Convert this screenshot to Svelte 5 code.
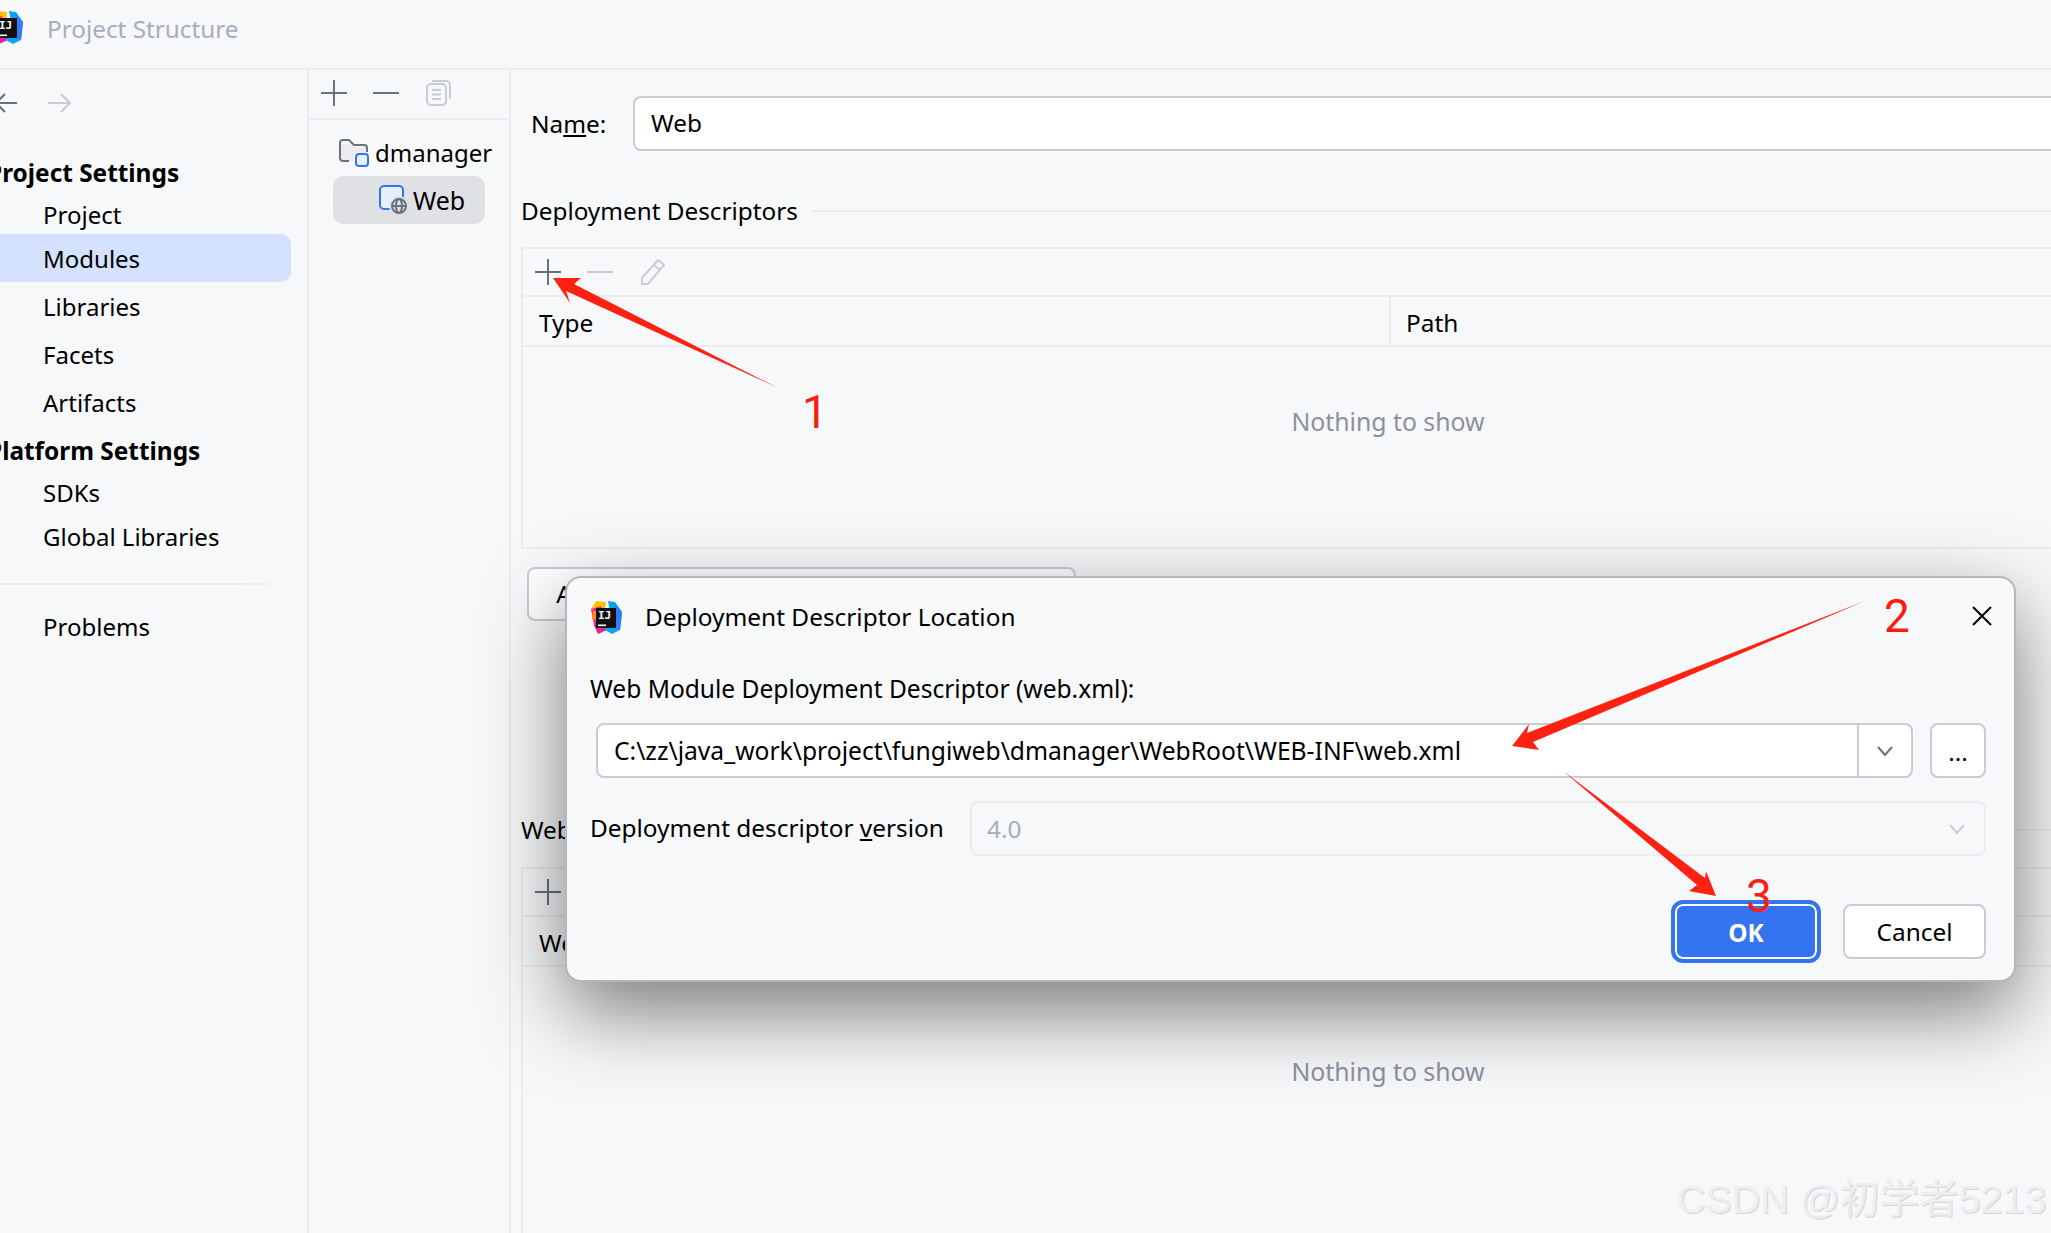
<script>
  const settings = ['Project', 'Modules', 'Libraries', 'Facets', 'Artifacts'];
  const platform = ['SDKs', 'Global Libraries'];
</script>

{#snippet logo()}
  <svg class="logo" width="31" height="33" viewBox="0 0 31 33">
    <polygon points="5,0 15,1 14,12 0,8" fill="#ffc107"/>
    <polygon points="0,8 10,5 12,26 7,32 3,24" fill="#ff2d78"/>
    <polygon points="2,10 8,10 8,20 1,18" fill="#ff8a1f"/>
    <polygon points="3,24 12,22 16,29 7,33" fill="#e91e9c"/>
    <polygon points="17,0 24,1 31,11 29,29 21,33 14,29 20,16" fill="#08a6f2"/>
    <polygon points="24,3 31,11 29,29 24,27" fill="#2f7df6"/>
    <rect x="5" y="7" width="20" height="20" fill="#111114"/>
    <text x="7" y="18" class="logo-text">IJ</text>
    <rect x="7" y="23.5" width="8" height="1.6" fill="#fff"/>
  </svg>
{/snippet}

{#snippet plus(cls = '')}
  <svg class="ico {cls}" width="26" height="26" viewBox="0 0 26 26"><path d="M13 0v26M0 13h26"/></svg>
{/snippet}

{#snippet minus(cls = '')}
  <svg class="ico {cls}" width="26" height="26" viewBox="0 0 26 26"><path d="M0 13h26"/></svg>
{/snippet}

{#snippet chevron(cls = '')}
  <svg class="ico {cls}" width="18" height="12" viewBox="0 0 18 12"><path d="M2 2l7 8 7-8"/></svg>
{/snippet}

<div class="page">
  <header class="titlebar">
    {@render logo()}
    <span class="title">Project Structure</span>
  </header>

  <div class="body">
    <aside class="sidebar">
      <div class="nav">
        <svg class="ico" width="24" height="20" viewBox="0 0 24 20"><path d="M22 10H1M10 1l-9 9 9 9"/></svg>
        <svg class="ico off" width="24" height="20" viewBox="0 0 24 20"><path d="M1 10h21M14 1l9 9-9 9"/></svg>
      </div>
      <div class="heading">Project Settings</div>
      {#each settings as item, i}
        <div class="item" class:selected={item === 'Modules'} class:first={i === 0}>{item}</div>
      {/each}
      <div class="heading second">Platform Settings</div>
      {#each platform as item, i}
        <div class="item" class:sdk={i === 0} class:global={i === 1}>{item}</div>
      {/each}
      <div class="rule"></div>
      <div class="item problems">Problems</div>
    </aside>

    <aside class="tree">
      <div class="tree-tools">
        {@render plus()}
        {@render minus()}
        <svg class="ico off" width="26" height="26" viewBox="0 0 26 26">
          <rect x="2" y="4" width="19" height="21" rx="4"/>
          <path d="M7 1h14a4 4 0 0 1 4 4v14M7 10h9M7 14.500h9M7 19h9"/>
        </svg>
      </div>
      <div class="node">
        <svg width="30" height="28" viewBox="0 0 30 28">
          <path d="M1 20V5h10l4 3h12v6H15v8H4z" fill="#ebecf0"/>
          <path d="M10 22H4a3 3 0 0 1-3-3V4a3 3 0 0 1 3-3h6l5 5h10a3 3 0 0 1 3 3v4" fill="none" stroke="#6c707e" stroke-width="2"/>
          <rect x="17" y="15" width="12" height="12" rx="3" fill="#e7effd" stroke="#3574f0" stroke-width="2"/>
        </svg>
        <span>dmanager</span>
      </div>
      <div class="node web">
        <svg width="28" height="30" viewBox="0 0 28 30">
          <rect x="1" y="1" width="23" height="23" rx="4" fill="#e7effd" stroke="#3574f0" stroke-width="2"/>
          <circle cx="20" cy="21" r="10" fill="#dfe1e5"/>
          <g fill="none" stroke="#6c707e" stroke-width="2">
            <circle cx="20" cy="21" r="7"/>
            <ellipse cx="20" cy="21" rx="3" ry="7"/>
            <path d="M13 21h14"/>
          </g>
        </svg>
        <span>Web</span>
      </div>
    </aside>

    <main class="content">
      <div class="name-row">
        <label for="module-name"><span>Na<u>m</u>e:</span></label>
        <div class="input" id="module-name">Web</div>
      </div>

      <div class="section">
        <span>Deployment Descriptors</span>
        <i></i>
      </div>
      <div class="table short">
        <div class="tools">
          {@render plus()}
          {@render minus('off')}
          <svg class="ico off" width="26" height="26" viewBox="0 0 26 26">
            <path d="M19 1l6 5L9 25H3v-6zM15 6l6 5"/>
          </svg>
        </div>
        <div class="head">
          <div class="col-a">Type</div>
          <div class="col-b">Path</div>
        </div>
        <div class="empty">Nothing to show</div>
      </div>

      <div class="add-btn">Add Application Server specific descriptor...</div>

      <div class="section web-section">
        <span>Web Resource Directories</span>
        <i></i>
      </div>
      <div class="table tall">
        <div class="tools">
          {@render plus()}
          {@render minus('off')}
        </div>
        <div class="head">
          <div class="col-a">Web Resource Directory</div>
          <div class="col-b">Path Relative to Deployment Root</div>
        </div>
        <div class="empty">Nothing to show</div>
      </div>
    </main>
  </div>

  <div class="dialog">
    <div class="dlg-head">
      {@render logo()}
      <span>Deployment Descriptor Location</span>
      <svg class="close" width="20" height="20" viewBox="0 0 20 20"><path d="M1 1l18 18M19 1L1 19"/></svg>
    </div>
    <div class="dlg-label">Web Module Deployment Descriptor (web.xml):</div>
    <div class="path-row">
      <div class="path">
        <span class="path-text">C:\zz\java_work\project\fungiweb\dmanager\WebRoot\WEB-INF\web.xml</span>
        <div class="path-arrow">{@render chevron()}</div>
      </div>
      <div class="browse">...</div>
    </div>
    <div class="version-row">
      <span class="version-label">Deployment descriptor <u>v</u>ersion</span>
      <div class="version">
        <span>4.0</span>
        {@render chevron('off')}
      </div>
    </div>
    <div class="dlg-foot">
      <div class="ok">OK</div>
      <div class="cancel">Cancel</div>
    </div>
  </div>

  <svg class="arrows" width="2051" height="1233" viewBox="0 0 2051 1233">
    <polygon points="553,278 581,278 574,284 776,387 566,291 570,303"/>
    <polygon points="1865,601 1533,742 1539,750 1512,746 1529,724 1527,733"/>
    <polygon points="1563,771 1705,878 1706,871 1716,896 1689,891 1697,885"/>
  </svg>
  <span class="mark one">1</span>
  <span class="mark two">2</span>
  <span class="mark three">3</span>
  <span class="watermark">CSDN @初学者5213</span>
</div>

<style>
  :global(body) {
    margin: 0;
  }
  .page {
    position: relative;
    width: 2051px;
    height: 1233px;
    overflow: hidden;
    display: flex;
    flex-direction: column;
    background: #f7f8fa;
    color: #000;
    font: 24px/30px "Noto Sans", "Open Sans", sans-serif;
  }
  .ico {
    flex: none;
    fill: none;
    stroke: #6c707e;
    stroke-width: 2;
  }
  .ico.off {
    stroke: #c9ccd6;
  }
  .logo-text {
    font: 700 11px "DejaVu Sans Mono", monospace;
    fill: #fff;
  }
  .logo {
    flex: none;
  }

  .titlebar {
    flex: none;
    height: 70px;
    box-sizing: border-box;
    display: flex;
    align-items: flex-start;
    gap: 24px;
    margin-left: -8px;
    padding-top: 11px;
    border-bottom: 2px solid #ebecf0;
  }
  .title {
    color: #a8adbd;
    margin-top: 3px;
    font-size: 24.3px;
  }

  .body {
    flex: 1;
    display: flex;
    min-height: 0;
  }
  .sidebar {
    flex: none;
    width: 309px;
    box-sizing: border-box;
    border-right: 2px solid #ebecf0;
  }
  .nav {
    height: 82px;
    padding-top: 23px;
    box-sizing: border-box;
    display: flex;
    gap: 28px;
    margin-left: -5px;
  }
  .heading {
    height: 42px;
    line-height: 42px;
    margin-left: -13px;
    font-weight: 700;
    font-size: 24.4px;
  }
  .heading.second {
    height: 48px;
    line-height: 48px;
  }
  .item {
    height: 48px;
    line-height: 48px;
    padding-left: 43px;
    width: 248px;
  }
  .item.first {
    height: 40px;
    line-height: 42px;
  }
  .item.selected {
    background: #d4e2ff;
    border-radius: 0 10px 10px 0;
    margin-bottom: 1px;
    line-height: 50px;
  }
  .item.sdk {
    height: 36px;
    line-height: 36px;
  }
  .item.global {
    height: 52px;
    line-height: 52px;
  }
  .rule {
    height: 2px;
    margin: 20px 16px 18px 0;
    background: linear-gradient(to right, #ebecf0 85%, #f7f8fa);
  }

  .tree {
    flex: none;
    width: 202px;
    box-sizing: border-box;
    border-right: 2px solid #ebecf0;
  }
  .tree-tools {
    height: 50px;
    box-sizing: border-box;
    border-bottom: 2px solid #ebecf0;
    display: flex;
    gap: 26px;
    align-items: center;
    padding: 0 0 2px 12px;
  }
  .node {
    height: 36px;
    margin: 15px 0 5px 30px;
    display: flex;
    align-items: center;
    gap: 6px;
  }
  .node.web {
    height: 48px;
    width: 152px;
    box-sizing: border-box;
    margin: 0 0 0 24px;
    padding: 0 0 0 46px;
    gap: 6px;
    background: #dfe1e5;
    border-radius: 10px;
    font-size: 25px;
  }

  .content {
    flex: 1;
    min-width: 0;
    overflow: hidden;
    display: flex;
    flex-direction: column;
    padding-left: 10px;
    font-size: 24.4px;
  }
  .name-row {
    margin: 26px -20px 0 10px;
    display: flex;
    align-items: center;
  }
  .name-row label {
    flex: none;
    width: 102px;
  }
  .input {
    flex: 1;
    height: 55px;
    box-sizing: border-box;
    border: 2px solid #c9ccd6;
    border-right: none;
    border-radius: 8px 0 0 8px;
    background: #fff;
    padding-left: 16px;
    line-height: 50px;
  }
  .section {
    height: 30px;
    margin-top: 45px;
    display: flex;
    align-items: center;
    gap: 14px;
    font-size: 24.3px;
  }
  .section i {
    flex: 1;
    height: 2px;
    background: #ebecf0;
  }
  .web-section {
    margin-top: 194px;
  }
  .table {
    margin: 21px 0 0;
    border: 2px solid #ebecf0;
    border-right: none;
    box-sizing: border-box;
  }
  .table.short {
    height: 302px;
  }
  .table.tall {
    flex: 1;
    border-bottom: none;
    margin-top: 22px;
  }
  .tools {
    height: 48px;
    box-sizing: border-box;
    border-bottom: 2px solid #ebecf0;
    display: flex;
    align-items: center;
    gap: 26px;
    padding: 0 0 0 12px;
  }
  .head {
    height: 50px;
    box-sizing: border-box;
    border-bottom: 2px solid #ebecf0;
    display: flex;
    align-items: center;
  }
  .col-a {
    width: 868px;
    height: 100%;
    line-height: 51px;
    padding-left: 16px;
    box-sizing: border-box;
    border-right: 2px solid #ebecf0;
    white-space: nowrap;
  }
  .col-b {
    padding-left: 15px;
    margin-top: 3px;
    white-space: nowrap;
  }
  /* the table runs on past the window edge, so its centred text sits right of the visible middle */
  .empty {
    text-align: center;
    color: #8c90a0;
    padding: 59px 0 0 202px;
    font-size: 24.8px;
  }
  .tall .empty {
    padding-top: 89px;
  }
  .add-btn {
    align-self: flex-start;
    width: 549px;
    height: 54px;
    box-sizing: border-box;
    margin: 18px 0 0 6px;
    border: 2px solid #c9ccd6;
    border-radius: 8px;
    background: #fff;
    text-align: center;
    line-height: 50px;
    white-space: nowrap;
    overflow: hidden;
  }

  .dialog {
    position: absolute;
    left: 565px;
    top: 576px;
    width: 1451px;
    height: 406px;
    box-sizing: border-box;
    border: 2px solid #b5b6ba;
    border-radius: 16px;
    background: #f7f8fa;
    box-shadow: 0 30px 80px rgba(0, 0, 0, 0.5);
    padding: 0 28px 0 23px;
    display: flex;
    flex-direction: column;
    font-size: 24.4px;
  }
  .dlg-head {
    height: 78px;
    flex: none;
    display: flex;
    align-items: center;
    gap: 23px;
    margin-left: 1px;
  }
  .close {
    margin: -2px -6px 0 auto;
    fill: none;
    stroke: #000;
    stroke-width: 2;
  }
  .dlg-label {
    margin-top: 18px;
    height: 30px;
    font-size: 24.55px;
  }
  .path-row {
    margin: 19px 0 0 6px;
    display: flex;
    gap: 17px;
  }
  .path {
    flex: 1;
    height: 55px;
    box-sizing: border-box;
    border: 2px solid #c9ccd6;
    border-radius: 8px;
    background: #fff;
    display: flex;
    align-items: center;
    padding-left: 16px;
  }
  .path-text {
    flex: 1;
    font-size: 24.65px;
  }
  .path-arrow {
    width: 52px;
    height: 100%;
    border-left: 2px solid #c9ccd6;
    display: flex;
    align-items: center;
    justify-content: center;
  }
  .browse {
    flex: none;
    width: 56px;
    height: 55px;
    box-sizing: border-box;
    border: 2px solid #c9ccd6;
    border-radius: 8px;
    background: #fff;
    text-align: center;
    line-height: 54px;
  }
  .version-row {
    margin-top: 23px;
    display: flex;
    align-items: center;
  }
  .version-label {
    flex: none;
    width: 380px;
    margin-top: -2px;
  }
  .version {
    flex: 1;
    height: 55px;
    box-sizing: border-box;
    border: 2px solid #ebecf0;
    border-radius: 8px;
    color: #a8adbd;
    display: flex;
    align-items: center;
    justify-content: space-between;
    padding: 0 18px 0 15px;
  }
  .dlg-foot {
    margin-top: 44px;
    display: flex;
    justify-content: flex-end;
    align-items: center;
    gap: 22px;
  }
  .ok {
    width: 150px;
    height: 63px;
    box-sizing: border-box;
    border: 4px solid #3574f0;
    border-radius: 12px;
    box-shadow: inset 0 0 0 2px #fff;
    background: #3574f0;
    color: #fff;
    font-weight: 700;
    text-align: center;
    line-height: 57px;
  }
  .cancel {
    width: 143px;
    height: 55px;
    box-sizing: border-box;
    border: 2px solid #c9ccd6;
    border-radius: 8px;
    background: #fff;
    text-align: center;
    line-height: 52px;
  }

  .arrows {
    position: absolute;
    left: 0;
    top: 0;
    fill: #ff2212;
  }
  .mark {
    position: absolute;
    color: #fb1c14;
    font: 400 46px/46px Roboto, "Liberation Sans", sans-serif;
  }
  .one {
    left: 802px;
    top: 389px;
  }
  .two {
    left: 1884px;
    top: 593px;
  }
  .three {
    left: 1746px;
    top: 873px;
  }
  .watermark {
    position: absolute;
    left: 1677px;
    top: 1176px;
    font: 39.5px/46px "Liberation Sans", "Noto Sans CJK SC", sans-serif;
    color: #eceef0;
    text-shadow: 1px 1px 0 #d4d5d7;
    white-space: nowrap;
  }
</style>
